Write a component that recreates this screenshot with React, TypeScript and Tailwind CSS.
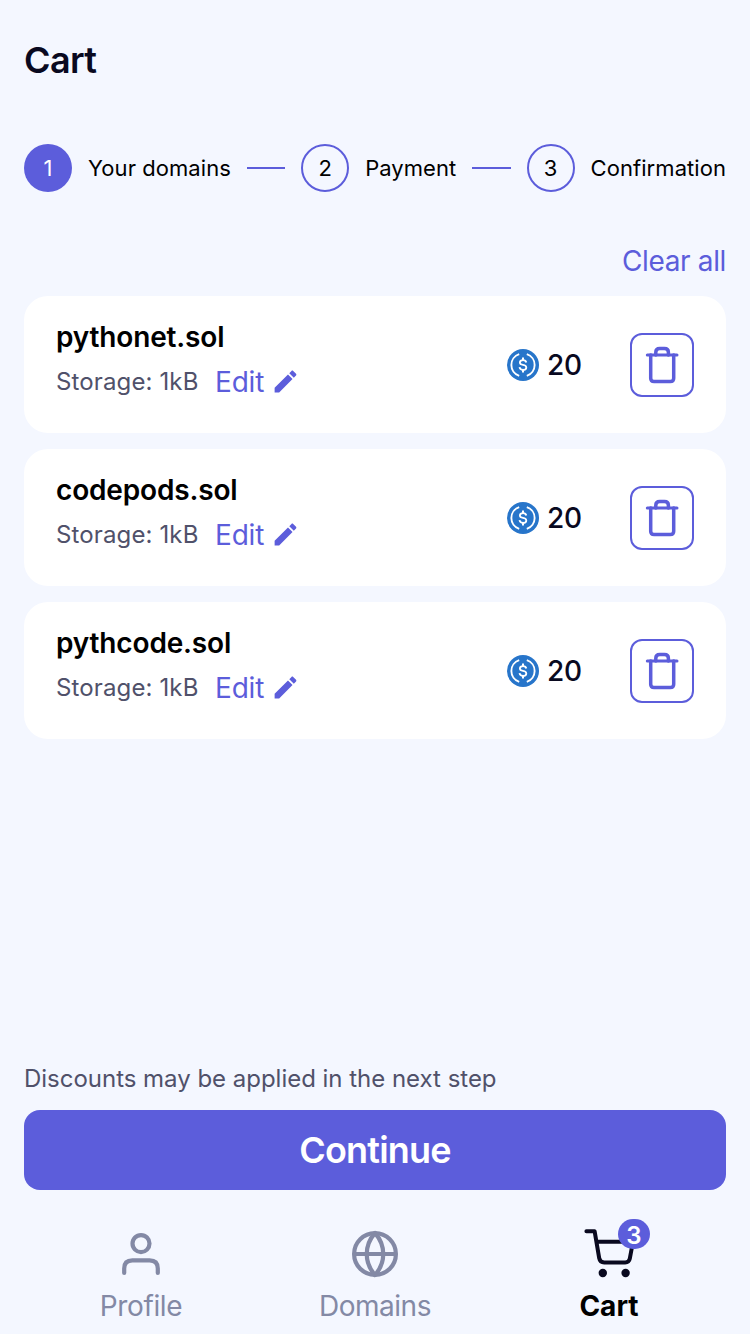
import React from "react";

const domains = ["pythonet.sol", "codepods.sol", "pythcode.sol"];

function PencilIcon() {
  return (
    <svg className="-mt-[2px] -ml-px h-[29px] w-[29px]" viewBox="0 0 24 24" fill="currentColor">
      <path d="M3 17.25V21h3.75L17.81 9.94l-3.75-3.75L3 17.25zM20.71 7.04c.39-.39.39-1.02 0-1.41l-2.34-2.34c-.39-.39-1.02-.39-1.41 0l-1.83 1.83 3.75 3.75 1.83-1.83z" />
    </svg>
  );
}

function UsdcIcon() {
  return (
    <svg className="h-8 w-8" viewBox="0 0 32 32" fill="none" stroke="#fff">
      <circle cx="16" cy="16" r="16" fill="#2775ca" stroke="none" />
      <path strokeWidth="1.9" d="M12.2 5.1A11.5 11.5 0 0 0 12.2 26.9M19.8 5.1A11.5 11.5 0 0 1 19.8 26.9" />
      <path strokeWidth="2" d="M16 8.4V11M16 21V23.6" />
      <path
        strokeWidth="1.8"
        d="M19.3 13.5C19 11.9 17.9 11.1 16.1 11.1C14.2 11.1 12.9 12 12.9 13.5C12.9 15.1 14.1 15.6 16 15.9C18 16.2 19.3 16.8 19.3 18.4C19.3 20 18 20.9 16 20.9C14 20.9 12.8 20 12.5 18.2"
      />
    </svg>
  );
}

function TrashIcon() {
  return (
    <svg className="h-10 w-10" viewBox="0 0 40 40" fill="none" stroke="currentColor" strokeWidth="3.5" strokeLinecap="round" strokeLinejoin="round">
      <path d="M5.3 10H35" strokeWidth="3" />
      <path d="M8.7 10V33.2Q8.7 36.5 12.1 36.5H28.3Q31.7 36.5 31.7 33.2V10" />
      <path d="M13.8 10V7.2Q13.8 3.4 17.7 3.4H22.5Q26.4 3.4 26.4 7.2V10" />
    </svg>
  );
}

function ProfileIcon() {
  return (
    <svg className="h-12 w-12" viewBox="0 0 48 48" fill="none" stroke="currentColor" strokeWidth="4.2" strokeLinecap="round">
      <circle cx="24" cy="13.6" r="8.5" />
      <path d="M7.2 43V38.5Q7.2 30.3 15.4 30.3H32.6Q40.8 30.3 40.8 38.5V43" />
    </svg>
  );
}

function GlobeIcon() {
  return (
    <svg className="h-12 w-12" viewBox="0 0 48 48" fill="none" stroke="currentColor" strokeWidth="4.2" strokeLinejoin="round">
      <circle cx="24" cy="24" r="20.9" />
      <path d="M3 24H45" />
      <path d="M24 3C13 15.5 13 32.5 24 45C35 32.5 35 15.5 24 3Z" />
    </svg>
  );
}

function CartIcon() {
  return (
    <svg className="h-12 w-[50px] overflow-visible" viewBox="0 0 50 48" fill="none" stroke="#09091f" strokeWidth="4" strokeLinecap="round" strokeLinejoin="round">
      <path d="M2.4 1.2H10.6L15.2 28.2Q16 32.5 20.2 32.5H41.2Q45 32.5 45.8 28.7L49 11.7H12.6" />
      <circle cx="18.8" cy="43" r="4.2" fill="#09091f" stroke="none" />
      <circle cx="41.6" cy="43" r="4.2" fill="#09091f" stroke="none" />
    </svg>
  );
}

function Step({ n, label, active }: { n: number; label: string; active?: boolean }) {
  return (
    <div className="flex shrink-0 items-center gap-4 text-[22px] leading-7">
      <div
        className={
          active
            ? "flex h-12 w-12 items-center justify-center rounded-full bg-[#5c5ddb] text-white"
            : "flex h-12 w-12 items-center justify-center rounded-full border-2 border-[#5c5ddb]"
        }
      >
        {n}
      </div>
      <span className="tracking-[0.06px] whitespace-nowrap">{label}</span>
    </div>
  );
}

function DomainCard({ name }: { name: string }) {
  return (
    <div className="flex h-[137px] items-center rounded-[24px] bg-white px-8">
      <div className="flex-1 self-start pt-[21px]">
        <div className="text-[28px] leading-10 font-semibold tracking-[-0.16px] text-black">{name}</div>
        <div className="mt-[5px] flex h-10 items-center">
          <span className="w-[159px] text-[24px] tracking-[0.13px] whitespace-nowrap text-[#50516a]">Storage: 1kB</span>
          <button className="flex items-center gap-2 text-[28px] tracking-[-0.2px] text-[#5c5ddb]">
            Edit
            <PencilIcon />
          </button>
        </div>
      </div>
      <div className="flex w-[123px] items-center gap-2 text-[28px] font-medium tracking-[-0.3px] text-[#09091f]">
        <UsdcIcon />
        20
      </div>
      <button className="flex h-16 w-16 items-center justify-center rounded-[12px] border-2 border-[#5c5ddb] text-[#5c5ddb]">
        <TrashIcon />
      </button>
    </div>
  );
}

export default function App() {
  return (
    <div className="flex h-[1334px] w-[750px] flex-col overflow-hidden bg-[#f4f7ff] px-6 font-[Inter,sans-serif] text-black">
      <h1 className="mt-[35px] text-[36px] leading-[50px] font-semibold tracking-[-0.6px] text-[#09091f]">Cart</h1>
      <div className="mt-[59px] flex h-12 items-center gap-4">
        <Step n={1} label="Your domains" active />
        <div className="h-[2px] flex-1 bg-[#5c5ddb]" />
        <Step n={2} label="Payment" />
        <div className="h-[2px] flex-1 bg-[#5c5ddb]" />
        <Step n={3} label="Confirmation" />
      </div>
      <button className="mt-[49px] self-end text-[28px] leading-10 tracking-[-0.35px] text-[#5c5ddb]">Clear all</button>
      <div className="mt-[15px] flex flex-col gap-4">
        {domains.map((name) => (
          <DomainCard key={name} name={name} />
        ))}
      </div>
      <div className="flex-1" />
      <p className="text-[24px] leading-8 tracking-[-0.02px] text-[#50516a]">Discounts may be applied in the next step</p>
      <button className="mt-[15px] h-20 shrink-0 rounded-[16px] bg-[#5c5ddb] text-[36px] font-semibold tracking-[-0.8px] text-white">Continue</button>
      <nav className="grid h-36 shrink-0 grid-cols-3 pt-10 text-[28px] leading-10 text-[#8389a5]">
        <div className="flex flex-col items-center">
          <ProfileIcon />
          <span className="mt-2 tracking-[-0.35px]">Profile</span>
        </div>
        <div className="flex flex-col items-center">
          <GlobeIcon />
          <span className="mt-2 tracking-[-0.5px]">Domains</span>
        </div>
        <div className="flex flex-col items-center">
          <div className="relative">
            <CartIcon />
            <span className="absolute -top-[11px] left-[34px] flex h-[30px] w-8 items-center justify-center rounded-full bg-[#5c5ddb] pt-[3px] text-[24px] font-semibold text-white">
              3
            </span>
          </div>
          <span className="mt-2 font-bold text-black">Cart</span>
        </div>
      </nav>
    </div>
  );
}
